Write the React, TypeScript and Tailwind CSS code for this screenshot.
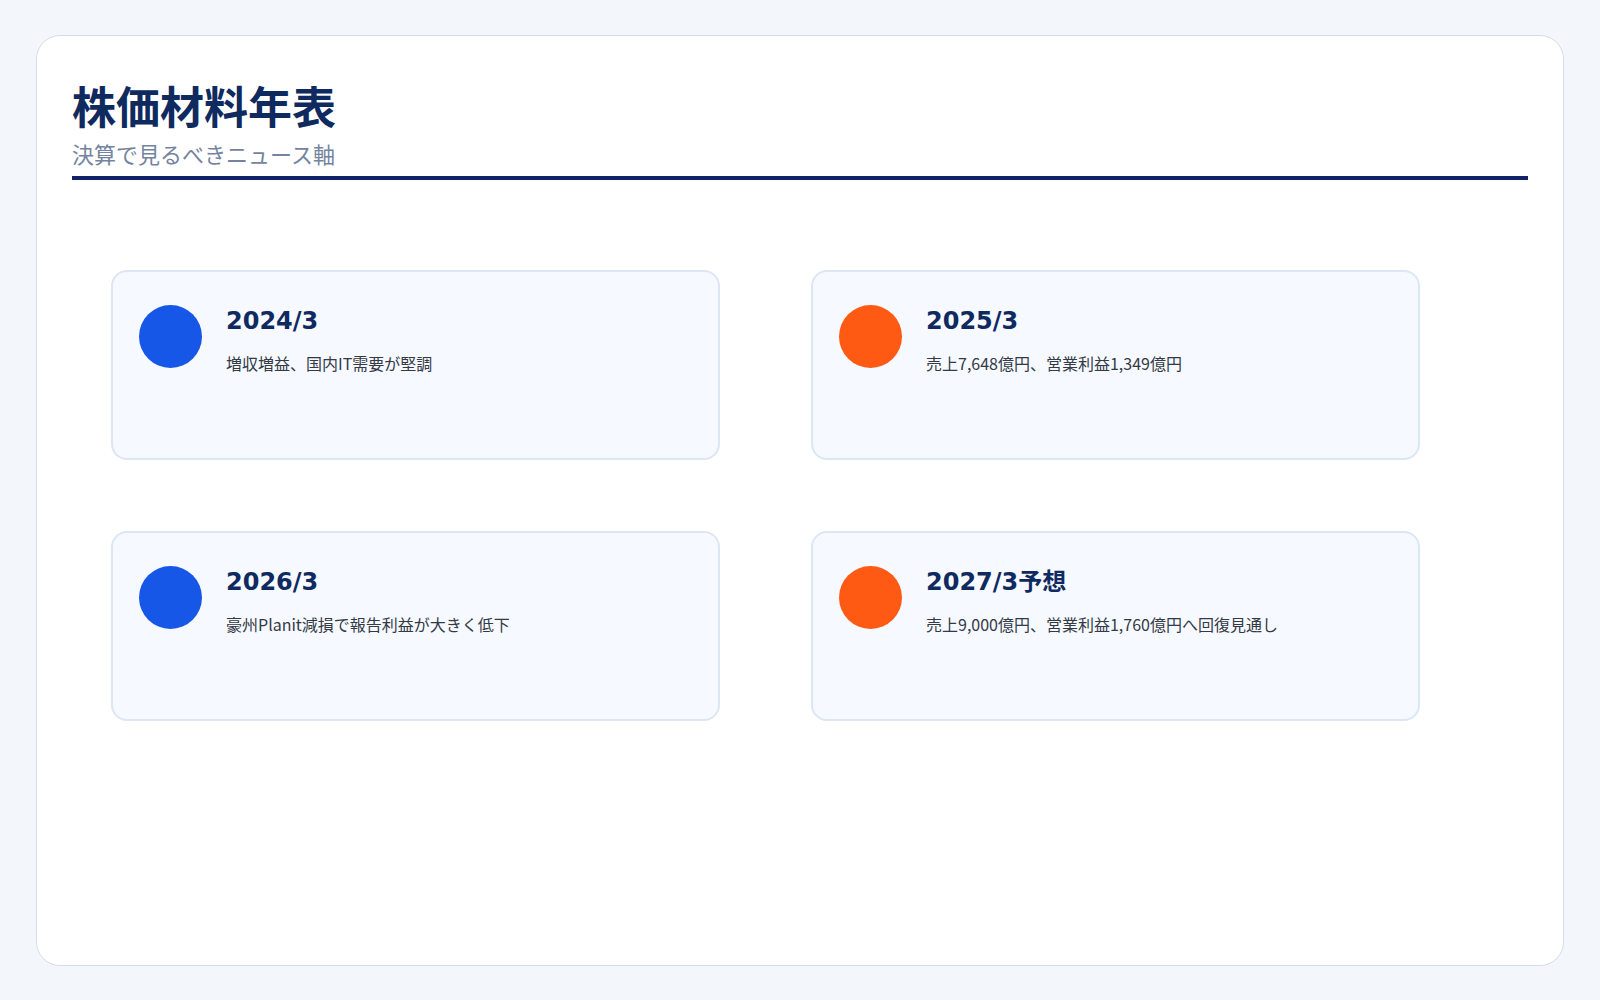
export default function App() {
  const items = [
    { y: "2024/3", d: "増収増益、国内IT需要が堅調", c: "bg-[#1657e8]" },
    { y: "2025/3", d: "売上7,648億円、営業利益1,349億円", c: "bg-[#ff5a14]" },
    { y: "2026/3", d: "豪州Planit減損で報告利益が大きく低下", c: "bg-[#1657e8]" },
    { y: "2027/3予想", d: "売上9,000億円、営業利益1,760億円へ回復見通し", c: "bg-[#ff5a14]" },
  ];
  return (
    <div className="w-[1600px] h-[1000px] bg-[#f3f6fb] p-[36px] pt-[35px]" style={{ fontFamily: '"DejaVu Sans","Noto Sans CJK JP",sans-serif' }}>
      <div className="h-[931px] bg-white border border-[#d3dcec] rounded-[24px] px-[35px] pt-[43px]">
        <h1 className="text-[44px] leading-[52px] font-bold text-[#0f2a5f]" style={{ fontFamily: '"Noto Sans CJK JP",sans-serif' }}>株価材料年表</h1>
        <div className="text-[22px] leading-[30px] text-[#7484a0] mt-[7px]" style={{ fontFamily: '"Noto Sans CJK JP",sans-serif' }}>決算で見るべきニュース軸</div>
        <div className="h-[4px] bg-[#0f2366] mt-[8px]" />
        <div className="grid grid-cols-[609px_609px] gap-x-[91px] gap-y-[71px] pl-[39px] mt-[90px]">
          {items.map((it) => (
            <div key={it.y} className="h-[190px] bg-[#f6f9ff] border-2 border-[#dde6f3] rounded-[16px] flex gap-[24px] pl-[26px] pt-[33px]">
              <div className={`w-[63px] h-[63px] rounded-full shrink-0 ${it.c}`} />
              <div>
                <div className="text-[24px] leading-[30px] font-bold text-[#0f2a5f] mt-[1px]">{it.y}</div>
                <div className="text-[16px] leading-[24px] text-[#333a45] mt-[15px]" style={{ fontFamily: '"Noto Sans CJK JP",sans-serif' }}>{it.d}</div>
              </div>
            </div>
          ))}
        </div>
      </div>
    </div>
  );
}
